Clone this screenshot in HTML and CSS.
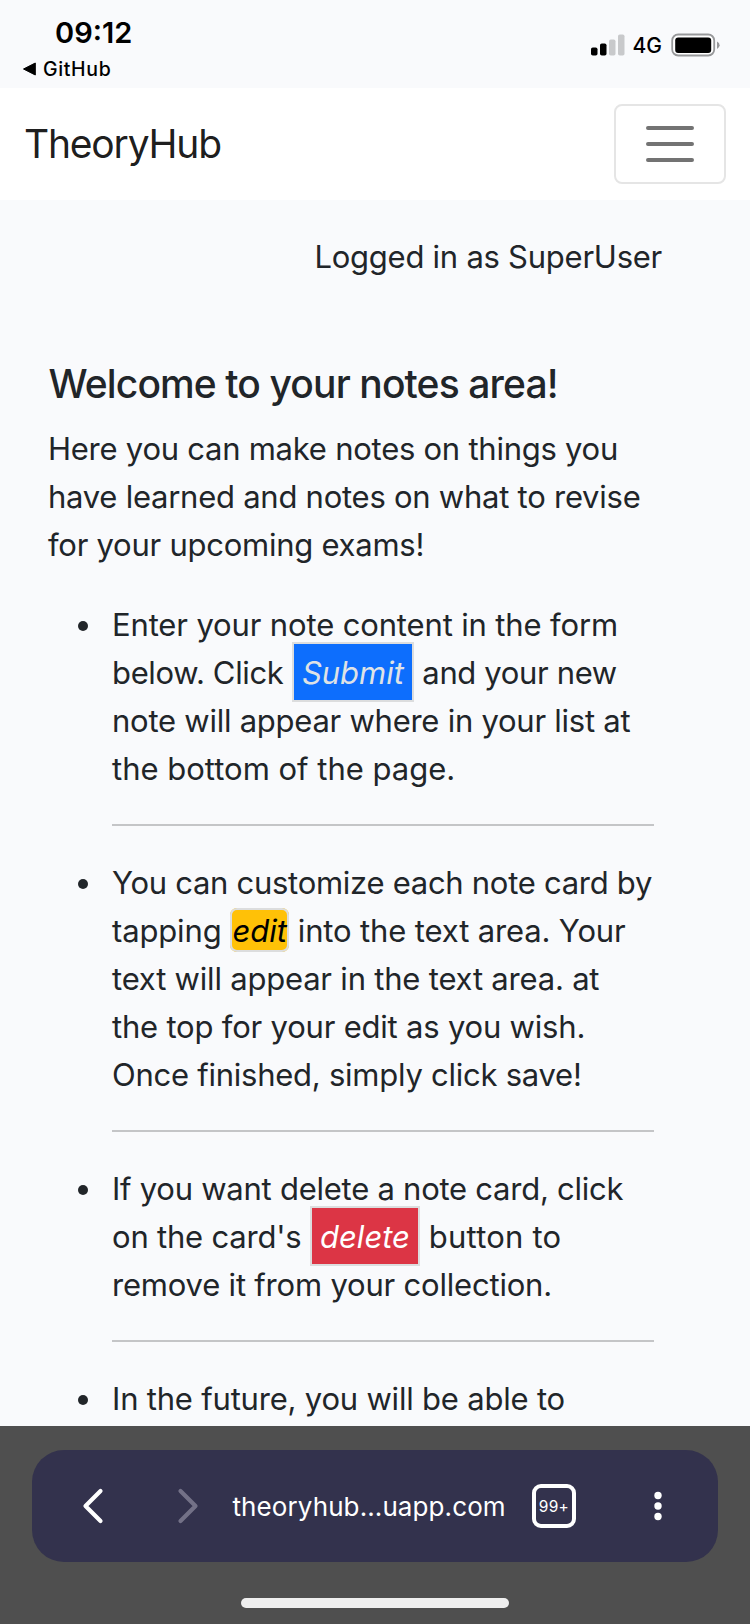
FILE: index.html
```html
<!DOCTYPE html>
<html lang="en">
<head>
<meta charset="utf-8">
<title>TheoryHub</title>
<link rel="stylesheet" href="styles.css">
</head>
<body>
<div class="screen">
  <header class="status">
    <div class="status-left">
      <div class="time">09:12</div>
      <div class="back-app"><svg width="14" height="14" viewBox="0 0 14 14"><path d="M0.500 7 L12.300 1 V13 Z" fill="#000" stroke="#000" stroke-linejoin="round"/></svg><span>GitHub</span></div>
    </div>
    <div class="status-right">
      <svg width="34" height="22" viewBox="0 0 34 22"><rect x="0" y="13.500" width="6.500" height="8" rx="1.800"/><rect x="9" y="9.500" width="6.500" height="12" rx="1.800"/><g fill="#c8c9cb"><rect x="18" y="5.500" width="6.500" height="16" rx="1.800"/><rect x="27" y="0.500" width="6.500" height="21" rx="1.800"/></g></svg>
      <span class="network">4G</span>
      <svg width="49" height="24" viewBox="0 0 49 24"><rect x="1.200" y="1.500" width="42" height="21" rx="6" fill="#fff" stroke="#97989a" stroke-width="1.800"/><rect x="4.200" y="4.500" width="36" height="15.500" rx="3" fill="#000"/><path d="M46 8.500 q2.600 1.200 2.600 3.700 t-2.600 3.700z" fill="#97989a"/></svg>
    </div>
  </header>

  <nav class="navbar">
    <a class="brand">TheoryHub</a>
    <div class="toggler"><svg width="60" height="60" viewBox="0 0 30 30"><path d="M4 7h22M4 15h22M4 23h22" fill="none" stroke="#737373" stroke-width="2" stroke-linecap="round"/></svg></div>
  </nav>

  <main class="content">
    <p class="login">Logged in as SuperUser</p>
    <section class="notes">
      <h5 class="title">Welcome to your notes area!</h5>
      <p class="intro">Here you can make notes on things you<br>have learned and notes on what to revise<br>for your upcoming exams!</p>
      <ul class="tips">
        <li><span class="snug">Enter your note content in the form</span><br><span class="tighter">below. Click </span><em class="tag submit">Submit</em><span class="tighter"> and your new</span><br>note will appear where in your list at<br><span class="normal">the bottom of the page.</span><hr></li>
        <li><span class="tight">You can customize each note card by</span><br><span class="snug">tapping </span><em class="tag edit">edit</em><span class="snug"> into the text area. Your</span><br><span class="close">text will appear in the text area. at</span><br><span class="close">the top for your edit as you wish.</span><br>Once finished, simply click save!<hr></li>
        <li>If you want delete a note card, click<br><span class="close">on the card's </span><em class="tag delete">delete</em><span class="loose"> button to</span><br><span class="close">remove it from your collection.</span><hr></li>
        <li><span class="close">In the future, you will be able to</span></li>
      </ul>
    </section>
  </main>

  <footer class="browser">
    <div class="pill">
      <svg class="back" width="24" height="38" viewBox="0 0 24 38"><path d="M19.500 4 L4.500 19 L19.500 34" fill="none" stroke="#fff" stroke-width="4.200" stroke-linecap="round" stroke-linejoin="round"/></svg>
      <svg class="forward" width="24" height="38" viewBox="0 0 24 38"><path d="M4.500 4 L19.500 19 L4.500 34" fill="none" stroke="#737187" stroke-width="4.200" stroke-linecap="round" stroke-linejoin="round"/></svg>
      <span class="url">theoryhub...uapp.com</span>
      <span class="tabs">99+</span>
      <svg class="more" width="8" height="30" viewBox="0 0 8 30" fill="#fff"><circle cx="4" cy="4.500" r="3.700"/><circle cx="4" cy="15" r="3.700"/><circle cx="4" cy="25.500" r="3.700"/></svg>
    </div>
    <div class="home"></div>
  </footer>
</div>
</body>
</html>
```
FILE: styles.css
```css
* { box-sizing: border-box; }
body { margin: 0; background: #f9fafc; color: #212529; font-family: Inter, "Liberation Sans", sans-serif; }
svg { display: block; flex: none; }
.screen { width: 750px; height: 1624px; display: flex; flex-direction: column; overflow: hidden; }

.status { height: 88px; flex: none; display: flex; justify-content: space-between; color: #000; }
.status-left { padding: 14px 0 0 23px; }
.time { font-size: 29px; font-weight: 600; line-height: 38px; padding-left: 32px; }
.back-app { display: flex; align-items: center; gap: 6px; font-size: 19.500px; font-weight: 500; line-height: 34px; letter-spacing: 0.650px; }
.status-right { display: flex; align-items: center; height: 90px; padding-right: 30px; }
.network { font-size: 21px; font-weight: 500; margin: 0 9px 0 8px; padding-top: 1px; }

.navbar { height: 112px; flex: none; background: #fff; display: flex; align-items: center; justify-content: space-between; padding: 0 24px; }
.brand { font-size: 39px; line-height: 60px; color: rgba(0, 0, 0, 0.900); letter-spacing: -1.200px; }
.toggler { width: 112px; height: 80px; border: 2px solid #e5e5e5; border-radius: 8px; display: flex; align-items: center; justify-content: center; }

.content { flex: 1; min-height: 0; overflow: hidden; font-size: 31px; line-height: 48px; letter-spacing: -0.250px; white-space: nowrap; }
.login { margin: 0; padding: 33px 88px 0 0; text-align: right; }
.notes { padding: 79px 96px 0 48px; }
.title { margin: 0 0 17px; font-size: 39px; font-weight: 500; line-height: 48px; letter-spacing: -0.880px; padding-left: 0.500px; }
.intro { margin: 0 0 32px; }
.tips { margin: 0; padding-left: 64px; list-style: none; }
.tips li { position: relative; }
.tips li::before { content: ""; position: absolute; left: -34px; top: 20px; width: 10px; height: 10px; border-radius: 50%; background: #212529; }
.tips hr { margin: 31px 0 33px; border: 0; border-top: 2px solid #c4c5c7; }

.normal, .tag { letter-spacing: 0; }
.snug { letter-spacing: -0.140px; }
.close { letter-spacing: -0.200px; }
.tight { letter-spacing: -0.280px; }
.tighter { letter-spacing: -0.350px; }
.loose { letter-spacing: 0.200px; }

.tag { border: 2px solid #dcddde; }
.submit { background: #0d6efd; color: #dee2e6; padding: 10px 8px 9px; }
.edit { background: #ffc107; color: #000; border-radius: 7px; padding: 2px 0.500px 1px; letter-spacing: -0.100px; }
.delete { background: #dc3545; color: #fff; padding: 10px 8px 9px; }

.browser { height: 198px; flex: none; background: #4f4f4f; padding: 24px 32px 0; display: flex; flex-direction: column; align-items: center; }
.pill { width: 686px; height: 112px; flex: none; background: #33324d; border-radius: 32px; display: flex; align-items: center; color: #fff; padding-left: 48.500px; }
.forward { margin-left: 71px; }
.url { width: 276px; margin-left: 33px; padding-top: 2px; font-size: 26px; line-height: 40px; letter-spacing: 0.100px; }
.tabs { width: 44px; height: 44px; margin-left: 23.500px; border: 4px solid #fff; border-radius: 9px; display: flex; align-items: center; justify-content: center; padding-top: 1px; font-size: 15.500px; letter-spacing: 0.300px; }
.more { margin-left: 77.500px; }
.home { width: 268px; height: 10px; flex: none; margin-top: 36px; border-radius: 5px; background: #efefef; }
```
